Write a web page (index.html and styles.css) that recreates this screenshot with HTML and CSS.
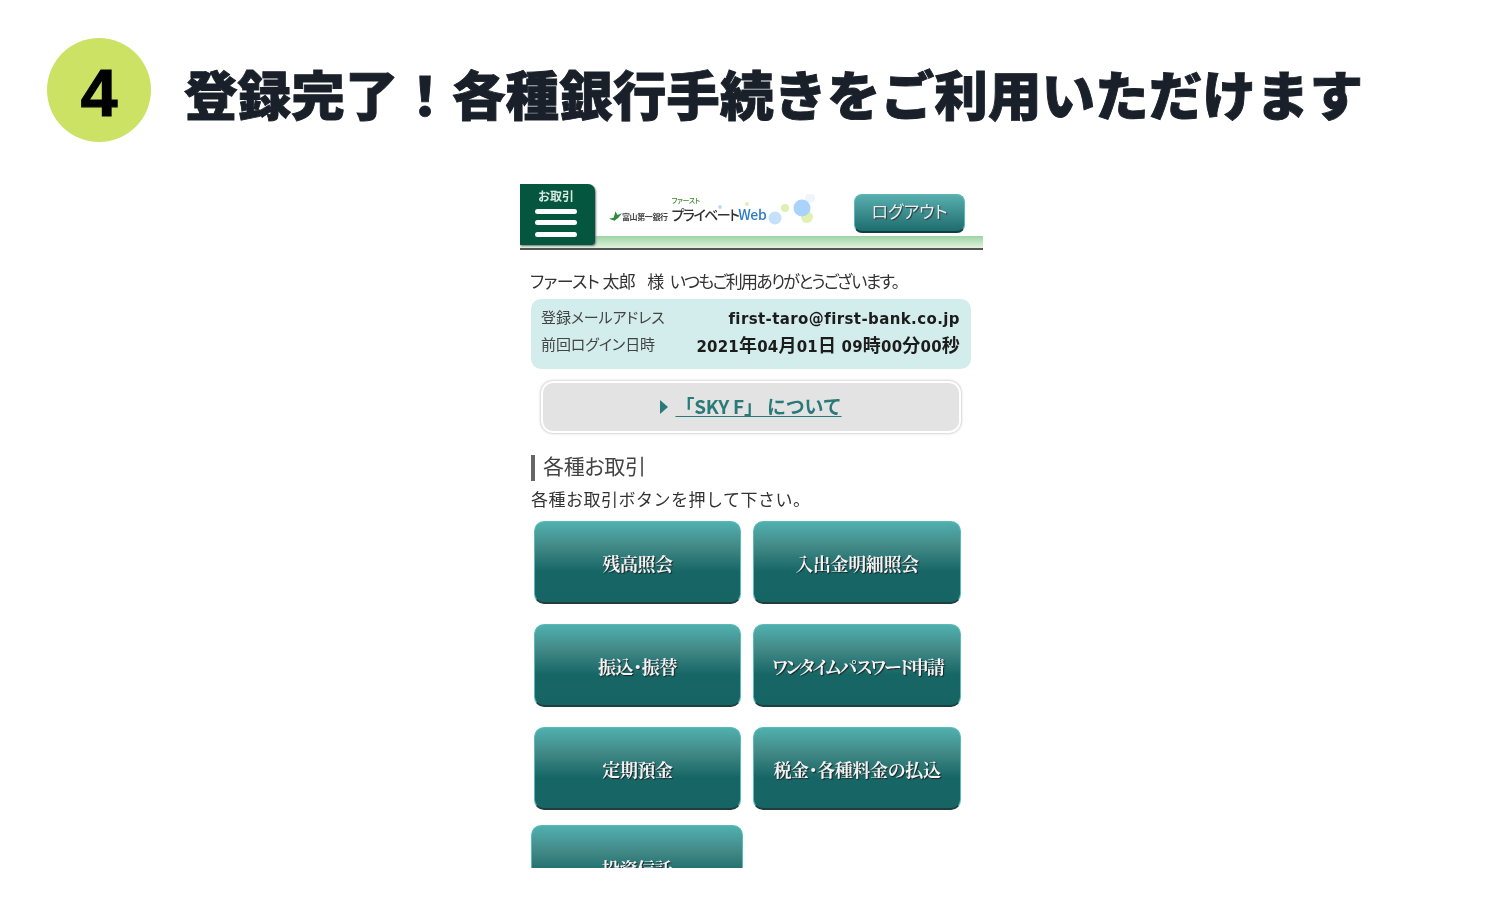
FILE: index.html
```html
<!DOCTYPE html>
<html lang="ja">
<head>
<meta charset="utf-8">
<title>登録完了</title>
<link rel="stylesheet" href="styles.css">
</head>
<body>
<header class="step">
  <div class="step-num">4</div>
  <h1 class="step-title">登録完了！各種銀行手続きをご利用いただけます</h1>
</header>
<main class="shot-wrap">
  <div class="shot">
    <div class="shot-inner">
      <div class="topbar">
        <div class="menu-tab">
          <span class="menu-label">お取引</span>
          <span class="menu-line"></span><span class="menu-line"></span><span class="menu-line"></span>
        </div>
        <svg class="logo-dots" width="110" height="34" viewBox="0 0 110 34">
          <circle cx="100" cy="4" r="5" fill="#eef5fd"/>
          <circle cx="97" cy="23" r="6" fill="#e2f0b4"/>
          <circle cx="92" cy="14" r="8.5" fill="#a9d3fb"/>
          <circle cx="75" cy="14" r="4" fill="#dcefb4"/>
          <circle cx="65" cy="24" r="6.5" fill="#c4e0fa"/>
          <circle cx="37" cy="10" r="2" fill="#dcefb4"/>
          <circle cx="10" cy="13" r="2" fill="#bcdcf8"/>
        </svg>
        <div class="logo">
          <svg class="logo-leaf" width="13" height="12" viewBox="0 0 14 12"><path d="M0 9 L5 8 L7 1 L9 5 L14 3 L10 8 L6 11 Z" fill="#2f8a3c"/></svg>
          <span class="logo-bank">富山第一銀行</span>
          <span class="logo-name"><span class="logo-ruby">ファースト</span>プライベート<span class="logo-web">Web</span></span>
        </div>
        <a class="logout">ログアウト</a>
      </div>
      <p class="greeting">ファースト 太郎<span class="greeting-gap">様</span><span class="greeting-msg">いつもご利用ありがとうございます。</span></p>
      <dl class="info">
        <div class="info-row"><dt>登録メールアドレス</dt><dd class="info-mail">first-taro@first-bank.co.jp</dd></div>
        <div class="info-row"><dt>前回ログイン日時</dt><dd class="info-date">2021<span class="kanji">年</span>04<span class="kanji">月</span>01<span class="kanji">日</span> 09<span class="kanji">時</span>00<span class="kanji">分</span>00<span class="kanji">秒</span></dd></div>
      </dl>
      <div class="about"><span class="about-arrow"></span><a class="about-link">「SKY F」 について</a></div>
      <h2 class="section">各種お取引</h2>
      <p class="hint">各種お取引ボタンを押して下さい。</p>
      <div class="grid">
        <a class="btn">残高照会</a>
        <a class="btn">入出金明細照会</a>
        <a class="btn">振込･振替</a>
        <a class="btn btn-tight">ワンタイムパスワード申請</a>
        <a class="btn">定期預金</a>
        <a class="btn">税金･各種料金の払込</a>
      </div>
      <a class="btn btn-wide">投資信託</a>
    </div>
  </div>
</main>
</body>
</html>
```
FILE: styles.css
```css
* { box-sizing: border-box; }
html, body { margin: 0; background: #fff; }
body { font-family: "Noto Sans CJK JP", "Noto Sans", sans-serif; color: #333; height: 900px; overflow: hidden; }

.step { display: flex; align-items: flex-start; gap: 33px; padding: 38px 0 0 47px; height: 184px; }
.step-num { width: 104px; height: 104px; border-radius: 50%; background: #cce264; color: #000; display: flex; align-items: center; justify-content: center; padding-top: 6px; font: 700 66px "Liberation Sans", sans-serif; -webkit-text-stroke: 1.2px #000; flex: none; }
.step-title { margin: 0; font-size: 53.6px; font-weight: 900; color: #1a202a; white-space: nowrap; -webkit-text-stroke: .9px #1a202a; height: 104px; line-height: 110px; }

.shot-wrap { display: flex; justify-content: center; padding-left: 3px; }
.shot { width: 463px; height: 684px; overflow: hidden; }
.shot-inner { filter: blur(0.5px); height: 720px; }

.topbar { position: relative; height: 66px; display: flex; align-items: flex-start; border-bottom: 2px solid #555; background: linear-gradient(#fff 0, #fff 52px, #9ed4a4 52px, #e6f5e4 65px); }
.menu-tab { position: relative; width: 75px; height: 61px; background: #04563f; border-radius: 0 7px 4px 0; box-shadow: 1px 1px 2px #777; display: flex; flex-direction: column; align-items: center; padding: 4px 3px 0 0; gap: 6.5px; }
.menu-label { color: #d8e8e0; font-size: 12px; line-height: 15px; font-weight: 700; margin-bottom: -1px; }
.menu-line { width: 42px; height: 5px; border-radius: 3px; background: #fff; }
.logo-dots { position: absolute; left: 190px; top: 10px; }
.logo { position: relative; display: flex; align-items: flex-end; margin: 15px 0 0 14px; height: 24px; }
.logo-leaf { margin-bottom: 1px; }
.logo-bank { font-size: 8px; font-weight: 700; line-height: 12px; color: #444; margin: 0 4px 0 0; letter-spacing: -.4px; }
.logo-name { position: relative; font-size: 14px; line-height: 17px; color: #333; font-weight: 500; font-feature-settings: "palt"; letter-spacing: -1.6px; }
.logo-ruby { position: absolute; left: 0; top: -10px; font-size: 7px; line-height: 9px; color: #3e8a2e; letter-spacing: -.3px; }
.logo-web { color: #2b7bc4; letter-spacing: -.3px; }
.logout { position: absolute; left: 334px; top: 10px; width: 111px; height: 39px; border-radius: 8px; background: linear-gradient(#58aeae, #1f6c6e); border: 1px solid #5ab8b8; border-bottom: 2px solid #123f44; color: #e4eeee; font-size: 17px; line-height: 32px; text-align: center; text-shadow: 1px 1px 1px #333; font-feature-settings: "palt"; }

.greeting { margin: 0; padding: 20px 0 0 10px; font-size: 17px; line-height: 22px; height: 49px; color: #333; font-feature-settings: "palt"; letter-spacing: -.6px; white-space: nowrap; }
.greeting-gap { margin: 0 6px 0 12px; }
.greeting-msg { letter-spacing: -1.75px; }

.info { margin: 0 12px 0 11px; height: 70px; background: #d3ecec; border-radius: 10px; padding: 5px 11px 0 10px; }
.info-row { display: flex; justify-content: space-between; align-items: center; height: 27px; }
.info dt { font-size: 15px; line-height: 22px; margin-top: -2px; color: #444; font-feature-settings: "palt"; letter-spacing: -.1px; }
.info dd { margin: 0; font: 700 15px/22px "DejaVu Sans", sans-serif; color: #1c1c1c; white-space: nowrap; }
.info-mail { letter-spacing: .4px; margin-top: 3px !important; }
.info-date { margin-top: 2px !important; letter-spacing: .2px; }
.kanji { font-family: "Noto Sans CJK JP", sans-serif; font-size: 18px; line-height: 22px; }

.about { margin: 12px 22px 0 21px; height: 52px; padding-bottom: 3px; background: #e3e3e3; border: 2px solid #fff; border-radius: 12px; box-shadow: 0 0 3px #aaa; display: flex; align-items: center; justify-content: center; gap: 7px; }
.about-arrow { width: 0; height: 0; margin-top: 3px; border-left: 8px solid #2a7a7a; border-top: 7px solid transparent; border-bottom: 7px solid transparent; }
.about-link { color: #2a7a7a; font-size: 19px; font-weight: 600; text-decoration: underline; text-underline-offset: 2px; letter-spacing: -.2px; white-space: nowrap; }

.section { margin: 22px 0 0 11px; height: 26px; border-left: 4px solid #666; padding-left: 8px; font-size: 21px; line-height: 20px; font-weight: 400; color: #444; font-feature-settings: "palt"; letter-spacing: -.3px; }
.hint { margin: 6px 0 0 11px; font-size: 17px; line-height: 24px; color: #333; letter-spacing: .5px; white-space: nowrap; }

.grid { display: grid; grid-template-columns: 207px 208px; column-gap: 12px; row-gap: 20px; margin: 10px 0 0 14px; }
.btn { display: flex; align-items: center; justify-content: center; height: 83px; padding-top: 1px; border-radius: 10px; background: linear-gradient(#50b0ae 0, #428a88 30%, #176666 62%, #176464 100%); border: 1px solid #59bcbc; border-bottom: 2px solid #1f3f3f; color: #f2f4f4; font-size: 18px; font-family: "Noto Serif CJK JP", "Noto Sans CJK JP", sans-serif; font-weight: 700; text-shadow: 1px 1px 1px #222; font-feature-settings: "palt"; white-space: nowrap; letter-spacing: -.4px; }
.btn-tight { letter-spacing: -2.3px; }
.btn-wide { width: 212px; margin: 15px 0 0 11px; height: 85px; }
```
